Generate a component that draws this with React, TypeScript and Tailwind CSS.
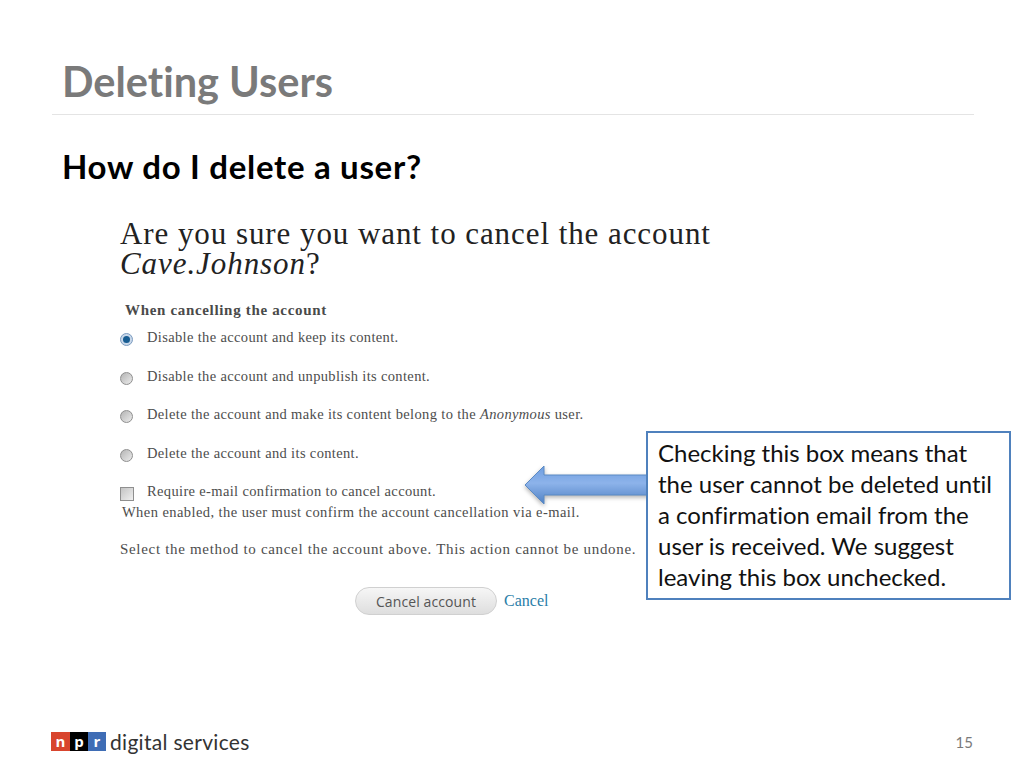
const serif = { fontFamily: '"Liberation Serif", serif' }
const slideFont = { fontFamily: 'Lato, sans-serif' }

function Radio({ checked = false }: { checked?: boolean }) {
  return (
    <span
      className={`mt-[5px] mr-[14px] flex h-[13px] w-[13px] shrink-0 items-center justify-center rounded-full border ${
        checked ? 'border-[#7c9cc0] bg-[#c9d8ea]' : 'border-[#8f8f8f] bg-gradient-to-br from-[#b4b4b4] to-[#ececec]'
      }`}
    >
      {checked && <span className="h-[7px] w-[7px] rounded-full bg-[#175d92]" />}
    </span>
  )
}

function Option({ children, mark }: { children: React.ReactNode; mark: React.ReactNode }) {
  return (
    <div className="flex items-start text-[#4d4d4d]">
      {mark}
      <span className="text-[14.5px] leading-[18px] tracking-[0.35px]">{children}</span>
    </div>
  )
}

function CancelForm() {
  return (
    <div className="ml-[120px] mt-[31px] w-[560px]" style={serif}>
      <h2 className="w-[600px] text-[31px] leading-[30px] tracking-[0.93px] text-[#222]">
        Are you sure you want to cancel the account <em>Cave.Johnson</em>?
      </h2>
      <p className="ml-[5px] mt-[22px] text-[15px] font-bold leading-[18px] tracking-[0.67px] text-[#4a4a4a]">
        When cancelling the account
      </p>
      <div className="mt-[9px] flex flex-col gap-[20.5px]">
        <Option mark={<Radio checked />}>Disable the account and keep its content.</Option>
        <Option mark={<Radio />}>Disable the account and unpublish its content.</Option>
        <Option mark={<Radio />}>
          Delete the account and make its content belong to the <em>Anonymous</em> user.
        </Option>
        <Option mark={<Radio />}>Delete the account and its content.</Option>
        <Option
          mark={<span className="mt-[5px] mr-[13px] h-[14px] w-[14px] shrink-0 border border-[#8f8f8f] bg-gradient-to-br from-[#c4c4c4] to-[#f0f0f0]" />}
        >
          Require e-mail confirmation to cancel account.
        </Option>
      </div>
      <p className="ml-[2px] mt-[2px] whitespace-nowrap text-[14.5px] leading-[18px] tracking-[0.43px] text-[#4d4d4d]">
        When enabled, the user must confirm the account cancellation via e-mail.
      </p>
      <p className="mt-[19px] whitespace-nowrap text-[15px] leading-[18px] tracking-[0.68px] text-[#4d4d4d]">
        Select the method to cancel the account above. This action cannot be undone.
      </p>
      <div className="ml-[235px] mt-[29px] flex items-center gap-[7px]">
        <span
          className="flex h-[28px] w-[142px] items-center justify-center rounded-full border border-[#d0d0d0] bg-gradient-to-b from-[#f6f6f6] to-[#dedede] text-[14px] tracking-[0.1px] text-[#555]"
          style={{ fontFamily: '"Open Sans", sans-serif' }}
        >
          Cancel account
        </span>
        <span className="text-[16px] text-[#2a7ea8]">Cancel</span>
      </div>
    </div>
  )
}

function Callout() {
  return (
    <>
      <svg className="absolute left-[522px] top-[462px] drop-shadow-[0_2px_2px_rgba(0,0,0,0.3)]" width="130" height="48" viewBox="0 0 130 48">
        <defs>
          <linearGradient id="arrowFill" x1="0" y1="0" x2="0" y2="1">
            <stop offset="0" stopColor="#6d9de0" />
            <stop offset="0.45" stopColor="#8db3ea" />
            <stop offset="1" stopColor="#4f81c4" />
          </linearGradient>
        </defs>
        <path d="M3 23 L22 4 V13 H128 V33 H22 V42 Z" fill="url(#arrowFill)" stroke="#5b8ac4" strokeWidth="1" />
      </svg>
      <div
        className="absolute left-[646px] top-[431px] h-[169px] w-[365px] whitespace-nowrap border-2 border-[#4f81bd] bg-white pl-[10px] pt-[4px] text-[24px] leading-[31px] text-[#111] [font-variant-ligatures:none]"
        style={slideFont}
      >
        Checking this box means that
        <br />
        the user cannot be deleted until
        <br />
        a confirmation email from the
        <br />
        user is received. We suggest
        <br />
        leaving this box unchecked.
      </div>
    </>
  )
}

function Footer() {
  return (
    <div className="mt-auto flex items-center justify-between pb-[15px] pl-[51px] pr-[51px]">
      <div className="flex items-center gap-[4px]">
        <div className="flex h-[19px] text-[15px] font-bold leading-[19px] text-white" style={{ fontFamily: '"Open Sans", sans-serif' }}>
          <span className="w-[19px] bg-[#d8452e] text-center">n</span>
          <span className="w-[18px] bg-black text-center">p</span>
          <span className="w-[18px] bg-[#3f6db5] text-center">r</span>
        </div>
        <span className="text-[21px] leading-[22px] tracking-[0.3px] text-[#333]" style={slideFont}>
          digital services
        </span>
      </div>
      <span className="text-[15px] text-[#7a7a7a]" style={slideFont}>
        15
      </span>
    </div>
  )
}

export default function App() {
  return (
    <div className="relative flex h-[768px] w-[1024px] flex-col overflow-hidden bg-white">
      <div className="[font-variant-ligatures:none]" style={slideFont}>
        <div className="ml-[52px] mr-[50px] h-[115px] border-b border-[#e4e4e4] pl-[10px] pt-[55px]">
          <h1 className="text-[41.5px] font-bold leading-[52px] text-[#7a7a7a]">Deleting Users</h1>
        </div>
        <p className="ml-[62px] mt-[29px] text-[33px] font-bold leading-[44px] tracking-[0.7px] text-black">How do I delete a user?</p>
      </div>
      <CancelForm />
      <Footer />
      <Callout />
    </div>
  )
}
